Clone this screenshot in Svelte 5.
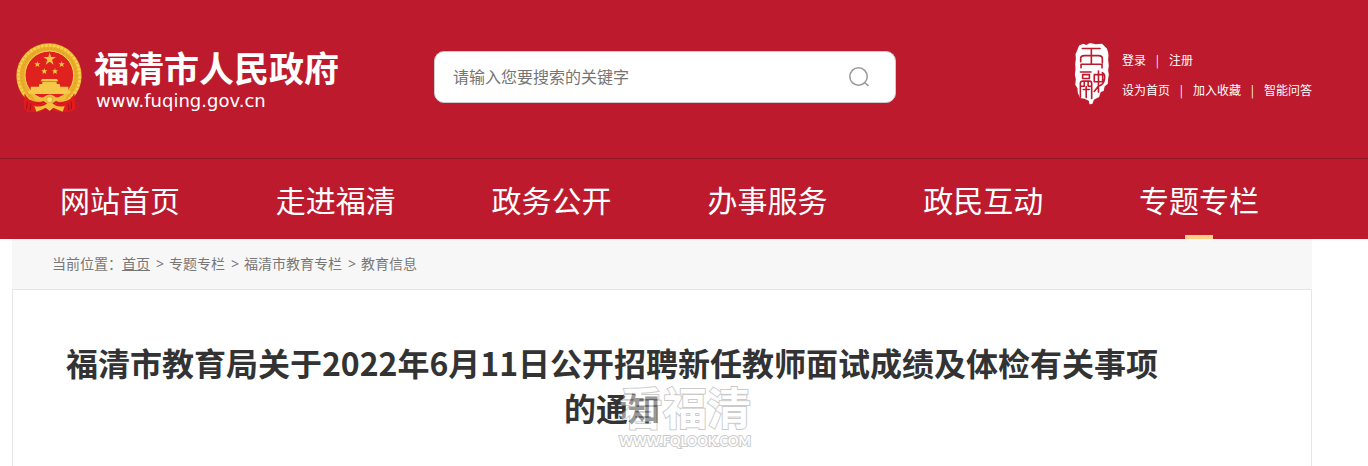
<script>
  const navItems = ['网站首页', '走进福清', '政务公开', '办事服务', '政民互动', '专题专栏'];
  const crumbs = ['专题专栏', '福清市教育专栏', '教育信息'];

  let current = $state('专题专栏');
  let keyword = $state('');
</script>

<header class="site-head">
  <div class="wrap head-row">
    <a class="logo" href="#home">
      <svg class="emblem" viewBox="18 19 198 210" aria-hidden="true">
        <circle cx="117" cy="118" r="98" fill="#e9ad2b" />
        <circle cx="117" cy="118" r="92" fill="none" stroke="#f7d04d" stroke-width="8" stroke-dasharray="9 3" />
        <circle cx="117" cy="118" r="82" fill="none" stroke="#dfa326" stroke-width="4" stroke-dasharray="5 5" />
        <circle cx="118" cy="116" r="73" fill="#e0221f" stroke="#f8d858" stroke-width="3" />
        <g fill="#f5c542">
          <path d="M119 47 L123 61 L138 61 L126 69 L131 84 L119 75 L107 84 L112 69 L100 61 L115 61 Z" />
          <path d="M82 73 L84 80 L91 80 L86 84 L88 91 L82 87 L76 91 L78 84 L73 80 L80 80 Z" />
          <path d="M155 73 L157 80 L164 80 L159 84 L161 91 L155 87 L149 91 L151 84 L146 80 L153 80 Z" />
          <path d="M103 94 L105 101 L112 101 L107 105 L109 112 L103 108 L97 112 L99 105 L94 101 L101 101 Z" />
          <path d="M135 94 L137 101 L144 101 L139 105 L141 112 L135 108 L129 112 L131 105 L126 101 L133 101 Z" />
        </g>
        <path d="M96 127 L141 127 L145 134 L92 134 Z M97 135 H140 V142 H97 Z M88 142 H149 L151 152 H86 Z M62 150 H175 V163 H62 Z M52 163 H184 L178 172 H58 Z" fill="#f5c84a" />
        <path d="M98 135 H139" stroke="#d9901f" stroke-width="2" />
        <path d="M44 170 Q52 190 72 194 Q98 204 119 202 Q140 204 164 194 Q184 190 193 170 L196 216 L181 227 L145 226 L113 215 L90 226 L54 227 L41 214 Z" fill="#e01b1f" />
        <path d="M52 194 L50 218 M184 194 L184 218 M63 200 L60 222 M174 200 L177 222" stroke="#a50f18" stroke-width="3" fill="none" />
        <path d="M60 168 Q92 190 105 179 Q119 168 133 179 Q146 190 176 168 L162 192 L137 192 L119 204 L101 192 L76 192 Z" fill="#f2bd3c" />
        <path d="M78 198 Q92 202 100 196 L112 204 M158 198 Q146 202 138 196 L126 204" stroke="#d4151b" stroke-width="5" fill="none" />
        <circle cx="119" cy="189" r="9" fill="#f9dc6e" stroke="#d99222" stroke-width="2" />
        <path d="M73 208 Q96 214 113 199 H126 Q143 214 164 208 L158 225 Q139 217 130 213 L119 223 L107 213 Q96 219 79 225 Z" fill="#f2c23c" />
      </svg>
      <span class="logo-text">
        <strong>福清市人民政府</strong>
        <span class="logo-url">www.fuqing.gov.cn</span>
      </span>
    </a>

    <form class="search" onsubmit={(e) => e.preventDefault()}>
      <input type="text" aria-label="搜索" placeholder="请输入您要搜索的关键字" bind:value={keyword} />
      <button type="submit" aria-label="搜索">
        <svg viewBox="0 0 22 22" width="22" height="22" aria-hidden="true">
          <circle cx="10.500" cy="10.500" r="8.700" />
          <path d="M16.500 16.500 L20.500 19.800" />
        </svg>
      </button>
    </form>

    <div class="tools">
      <svg class="seal" viewBox="18 14 108 192" aria-hidden="true">
        <path d="M32 22 L45 16 L54 20 L66 14 L84 18 L103 16 L111 24 L118 31 L122 43 L123 53 L122 67 L124 84 L122 98 L124 112 L122 125 L121 140 L111 149 L108 163 L99 166 L94 181 L78 190 L73 203 L64 204 L62 193 L49 187 L35 184 L28 168 L27 154 L20 143 L22 126 L19 112 L21 96 L20 79 L22 62 L21 48 L26 37 Z" fill="#fff" />
        <g fill="none" stroke="#bd1a2d" stroke-width="5" stroke-linecap="round" stroke-linejoin="round">
          <path d="M42 31 H97 M70 31 V80 M48 53 H92 M37 72 V62 Q37 53 48 53 M92 53 Q104 53 104 62 V76 M40 80 H99 M38 80 V91 M103 80 V91" />
          <path d="M36 104 H69 M43 112 H64 V124 H43 Z M36 182 V139 Q36 132 44 132 H64 Q71 132 71 139 V186 M48 132 V148 H37 M60 132 V148 H70 M45 158 H64 M54 149 V183" />
          <path d="M92 101 V166 M79 112 H105 V134 H79 Z M92 147 L79 164 M92 147 Q108 145 111 124 Q113 110 104 106" />
        </g>
      </svg>
      <div class="links">
        <div class="link-row">
          <a href="#login">登录</a><i>|</i><a href="#register">注册</a>
        </div>
        <div class="link-row">
          <a href="#sethome">设为首页</a><i>|</i><a href="#favorite">加入收藏</a><i>|</i><a href="#ask">智能问答</a>
        </div>
      </div>
    </div>
  </div>

  <nav class="nav">
    <div class="wrap nav-row">
      {#each navItems as item}
        <a href="#nav" class:active={item === current} onclick={() => (current = item)}>{item}</a>
      {/each}
    </div>
  </nav>
</header>

<main class="wrap">
  <div class="crumbs">
    <span>当前位置：</span><a class="home" href="#home">首页</a>
    {#each crumbs as c}
      <span class="sep">&gt;</span><a href="#crumb">{c}</a>
    {/each}
  </div>
  <article class="article">
    <h1>福清市教育局关于2022年6月11日公开招聘新任教师面试成绩及体检有关事项的通知</h1>
    <div class="watermark">
      <span class="wm-name">看福清</span>
      <span class="wm-url">WWW.FQLOOK.COM</span>
    </div>
  </article>
</main>

<style>
  :global(body) { background: #fff; font-family: 'Noto Sans', 'Noto Sans CJK SC', sans-serif; }
  a { color: inherit; text-decoration: none; }
  .wrap { margin: 0 56px 0 12px; }

  .site-head { background: #bd1a2d; color: #fff; }
  .head-row { display: flex; align-items: flex-start; height: 115px; padding-top: 43px; }
  .logo { display: flex; gap: 12px; flex: 0 0 418px; padding-left: 4px; }
  .emblem { width: 66px; height: 70px; flex: none; }
  .logo-text { display: flex; flex-direction: column; padding-top: 4px; }
  .logo-text strong { font-size: 35px; line-height: 44px; font-weight: 700; white-space: nowrap; }
  .logo-url { font-family: 'DejaVu Sans', sans-serif; font-size: 18px; line-height: 20px; padding-left: 2px; }

  .search { display: flex; align-items: center; flex: 0 1 462px; box-sizing: border-box; height: 52px; margin: 8px 20px 0 0; padding: 0 25px 0 18px; background: #fff; border: 1px solid #ccc; border-radius: 10px; }
  .search input { flex: 1; min-width: 0; height: 48px; padding: 0 0 2px; box-sizing: border-box; border: 0; outline: 0; background: none; font: 16px 'Noto Sans CJK SC', sans-serif; color: #333; }
  .search input::placeholder { color: #757575; opacity: 1; }
  .search button { display: flex; padding: 0; border: 0; background: none; cursor: pointer; }
  .search svg { fill: none; stroke: #999; stroke-width: 1.5; }

  .tools { display: flex; gap: 12px; margin-left: auto; }
  .seal { width: 36px; height: 62px; }
  .links { padding-top: 2px; font: 12px 'Noto Sans CJK SC', sans-serif; }
  .link-row { display: flex; height: 30px; line-height: 30px; white-space: nowrap; }
  .link-row i { width: 23px; text-align: center; font-style: normal; }

  .nav { border-top: 1px solid #8f1522; }
  .nav-row { display: grid; grid-template-columns: repeat(6, 1fr); padding-right: 5px; }
  .nav-row a { position: relative; height: 80px; line-height: 80px; font-size: 30px; text-align: center; font-family: 'Noto Sans CJK SC', sans-serif; white-space: nowrap; }
  .nav-row a.active::after { content: ''; position: absolute; left: 50%; bottom: 0; width: 28px; height: 4px; margin-left: -14px; background: #ffcf85; }

  .crumbs { display: flex; height: 50px; line-height: 50px; padding-left: 40px; background: #f7f7f7; color: #777; font-size: 14px; }
  .crumbs .home { text-decoration: underline; }
  .sep { margin: 0 5px 0 6px; }

  .article { position: relative; padding: 50px 150px 36px 50px; border: 1px solid #e6e6e6; border-bottom: 0; background: #fff; }
  h1 { margin: 0; font-family: 'Noto Sans CJK SC', sans-serif; font-size: 32px; line-height: 45px; font-weight: 700; text-align: center; color: #333; }
  /* hollow lettering: the fill is painted over the inner half of the stroke */
  .watermark { position: absolute; left: 606px; top: 94px; display: flex; flex-direction: column; align-items: center; opacity: 0.5; color: #fff; -webkit-text-stroke: 2px #999; paint-order: stroke fill; pointer-events: none; white-space: nowrap; }
  .wm-name { font-size: 44px; line-height: 48px; font-weight: 700; }
  .wm-url { font-family: Lato, sans-serif; font-size: 13px; line-height: 18px; font-weight: 700; }
</style>
